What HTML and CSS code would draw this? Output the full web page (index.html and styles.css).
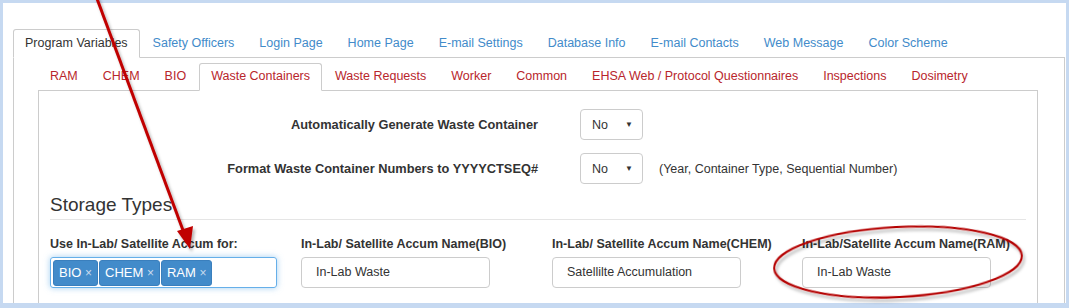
FILE: index.html
```html
<!DOCTYPE html>
<html lang="en">
<head>
    <meta charset="UTF-8">
    <title>Program Variables - Waste Containers</title>
    <link rel="stylesheet" href="styles.css">
</head>
<body>
    <div class="frame">
        <div class="tabs">
            <ul class="nav">
                <li class="active"><a href="#">Program Variables</a></li>
                <li><a href="#">Safety Officers</a></li>
                <li><a href="#">Login Page</a></li>
                <li><a href="#">Home Page</a></li>
                <li><a href="#">E-mail Settings</a></li>
                <li><a href="#">Database Info</a></li>
                <li><a href="#">E-mail Contacts</a></li>
                <li><a href="#">Web Message</a></li>
                <li><a href="#">Color Scheme</a></li>
            </ul>
            <div class="pane">
                <div class="tabs sub">
                    <ul class="nav">
                        <li><a href="#">RAM</a></li>
                        <li><a href="#">CHEM</a></li>
                        <li><a href="#">BIO</a></li>
                        <li class="active"><a href="#">Waste Containers</a></li>
                        <li><a href="#">Waste Requests</a></li>
                        <li><a href="#">Worker</a></li>
                        <li><a href="#">Common</a></li>
                        <li><a href="#">EHSA Web / Protocol Questionnaires</a></li>
                        <li><a href="#">Inspections</a></li>
                        <li><a href="#">Dosimetry</a></li>
                    </ul>
                    <div class="pane inner">
                        <div class="form-row first">
                            <label class="row-label">Automatically Generate Waste Container</label>
                            <div class="select"><span>No</span><span class="caret">&#9660;</span></div>
                        </div>
                        <div class="form-row">
                            <label class="row-label">Format Waste Container Numbers to YYYYCTSEQ#</label>
                            <div class="select"><span>No</span><span class="caret">&#9660;</span></div>
                            <span class="help">(Year, Container Type, Sequential Number)</span>
                        </div>

                        <h3>Storage Types</h3>

                        <div class="fields">
                            <div class="field">
                                <label>Use In-Lab/ Satellite Accum for:</label>
                                <div class="tag-input">
                                    <span class="tag">BIO <i>&times;</i></span>
                                    <span class="tag">CHEM <i>&times;</i></span>
                                    <span class="tag">RAM <i>&times;</i></span>
                                </div>
                            </div>
                            <div class="field">
                                <label>In-Lab/ Satellite Accum Name(BIO)</label>
                                <div class="text-input">In-Lab Waste</div>
                            </div>
                            <div class="field">
                                <label>In-Lab/ Satellite Accum Name(CHEM)</label>
                                <div class="text-input">Satellilte Accumulation</div>
                            </div>
                            <div class="field">
                                <label>In-Lab/Satellite Accum Name(RAM)</label>
                                <div class="text-input">In-Lab Waste</div>
                            </div>
                        </div>
                    </div>
                </div>
            </div>
        </div>
    </div>

    <!-- annotation overlay -->
    <svg class="marks" width="1069" height="308" viewBox="0 0 1069 308">
        <defs>
            <filter id="shadow" x="-20%" y="-20%" width="140%" height="140%">
                <feDropShadow dx="2" dy="3" stdDeviation="1.5" flood-color="#000" flood-opacity="0.3"/>
            </filter>
        </defs>
        <g filter="url(#shadow)" fill="none" stroke="#c00000">
            <line x1="96" y1="-4" x2="184" y2="233" stroke-width="3"/>
            <polygon points="190,249 177,231 193,226" fill="#c00000" stroke="none"/>
            <ellipse cx="898" cy="262" rx="124" ry="35" stroke-width="2" stroke="#b40000" transform="rotate(-3 898 262)"/>
        </g>
    </svg>
</body>
</html>
```

FILE: styles.css
```css
* {
    margin: 0;
    padding: 0;
    box-sizing: border-box;
}

body {
    font-family: 'Liberation Sans', Arial, sans-serif;
    font-size: 12.5px;
    color: #333;
    background: #c6d9f1;
    padding: 3px;
    width: 1069px;
    height: 308px;
    overflow: hidden;
    position: relative;
}

.frame {
    background: #fff;
    width: 1063px;
    height: 300px;
    padding-top: 26px;
    overflow: hidden;
}

.frame > .tabs {
    margin: 0 1px 0 10px;
}

.nav {
    list-style: none;
    display: flex;
    border-bottom: 1px solid #ccc;
}

.nav li {
    margin-bottom: -1px;
    margin-right: 1px;
}

.nav a {
    display: block;
    padding: 6px 11px;
    line-height: 15px;
    border: 1px solid transparent;
    border-radius: 3px 3px 0 0;
    color: #428bca;
    text-decoration: none;
}

.nav .active a {
    color: #333;
    background: #fff;
    border-color: #ccc #ccc transparent;
}

.pane {
    border: 1px solid #ccc;
    border-top: none;
    padding: 5px 26px 0 24px;
    height: 260px;
}

.sub .nav a {
    color: #b8262c;
    padding: 5px 11px 6px;
}

.sub .nav .active a {
    color: #b8262c;
}

.pane.inner {
    padding: 18px 11px 0 11px;
    height: 230px;
}

.form-row {
    display: flex;
    align-items: center;
    margin-top: 13px;
}

.form-row.first {
    margin-top: 0;
}

.row-label {
    width: 488px;
    text-align: right;
    font-weight: bold;
    font-size: 12.8px;
    margin-right: 42px;
}

.select {
    width: 63px;
    height: 31px;
    border: 1px solid #ccc;
    border-radius: 4px;
    display: flex;
    align-items: center;
    justify-content: space-between;
    padding: 0 9px 0 11px;
}

.caret {
    font-size: 8px;
    color: #333;
}

.help {
    margin-left: 16px;
}

h3 {
    font-size: 19px;
    font-weight: normal;
    line-height: 21px;
    margin-top: 10px;
    padding-bottom: 4px;
    border-bottom: 1px solid #e5e5e5;
}

.fields {
    display: grid;
    grid-template-columns: 251px 251px 250px 250px;
    margin-top: 16px;
}

.field label {
    display: block;
    font-weight: bold;
    line-height: 16px;
    margin-bottom: 5px;
}

.text-input {
    width: 189px;
    height: 31px;
    border: 1px solid #ccc;
    border-radius: 4px;
    padding: 0 14px;
    line-height: 29px;
}

.tag-input {
    width: 227px;
    height: 31px;
    border: 1px solid #66afe9;
    border-radius: 3px;
    box-shadow: 0 0 6px rgba(102, 175, 233, 0.6);
    display: flex;
    align-items: center;
    gap: 1px;
    padding: 0 2px;
}

.tag {
    background: #428bca;
    border: 1px solid #3a7fbd;
    border-radius: 3px;
    color: #fff;
    font-size: 13px;
    height: 26px;
    line-height: 24px;
    padding: 0 5px;
}

.tag i {
    font-style: normal;
    color: #c9dcee;
    font-size: 12px;
}

.marks {
    position: absolute;
    top: 0;
    left: 0;
    pointer-events: none;
}
```
